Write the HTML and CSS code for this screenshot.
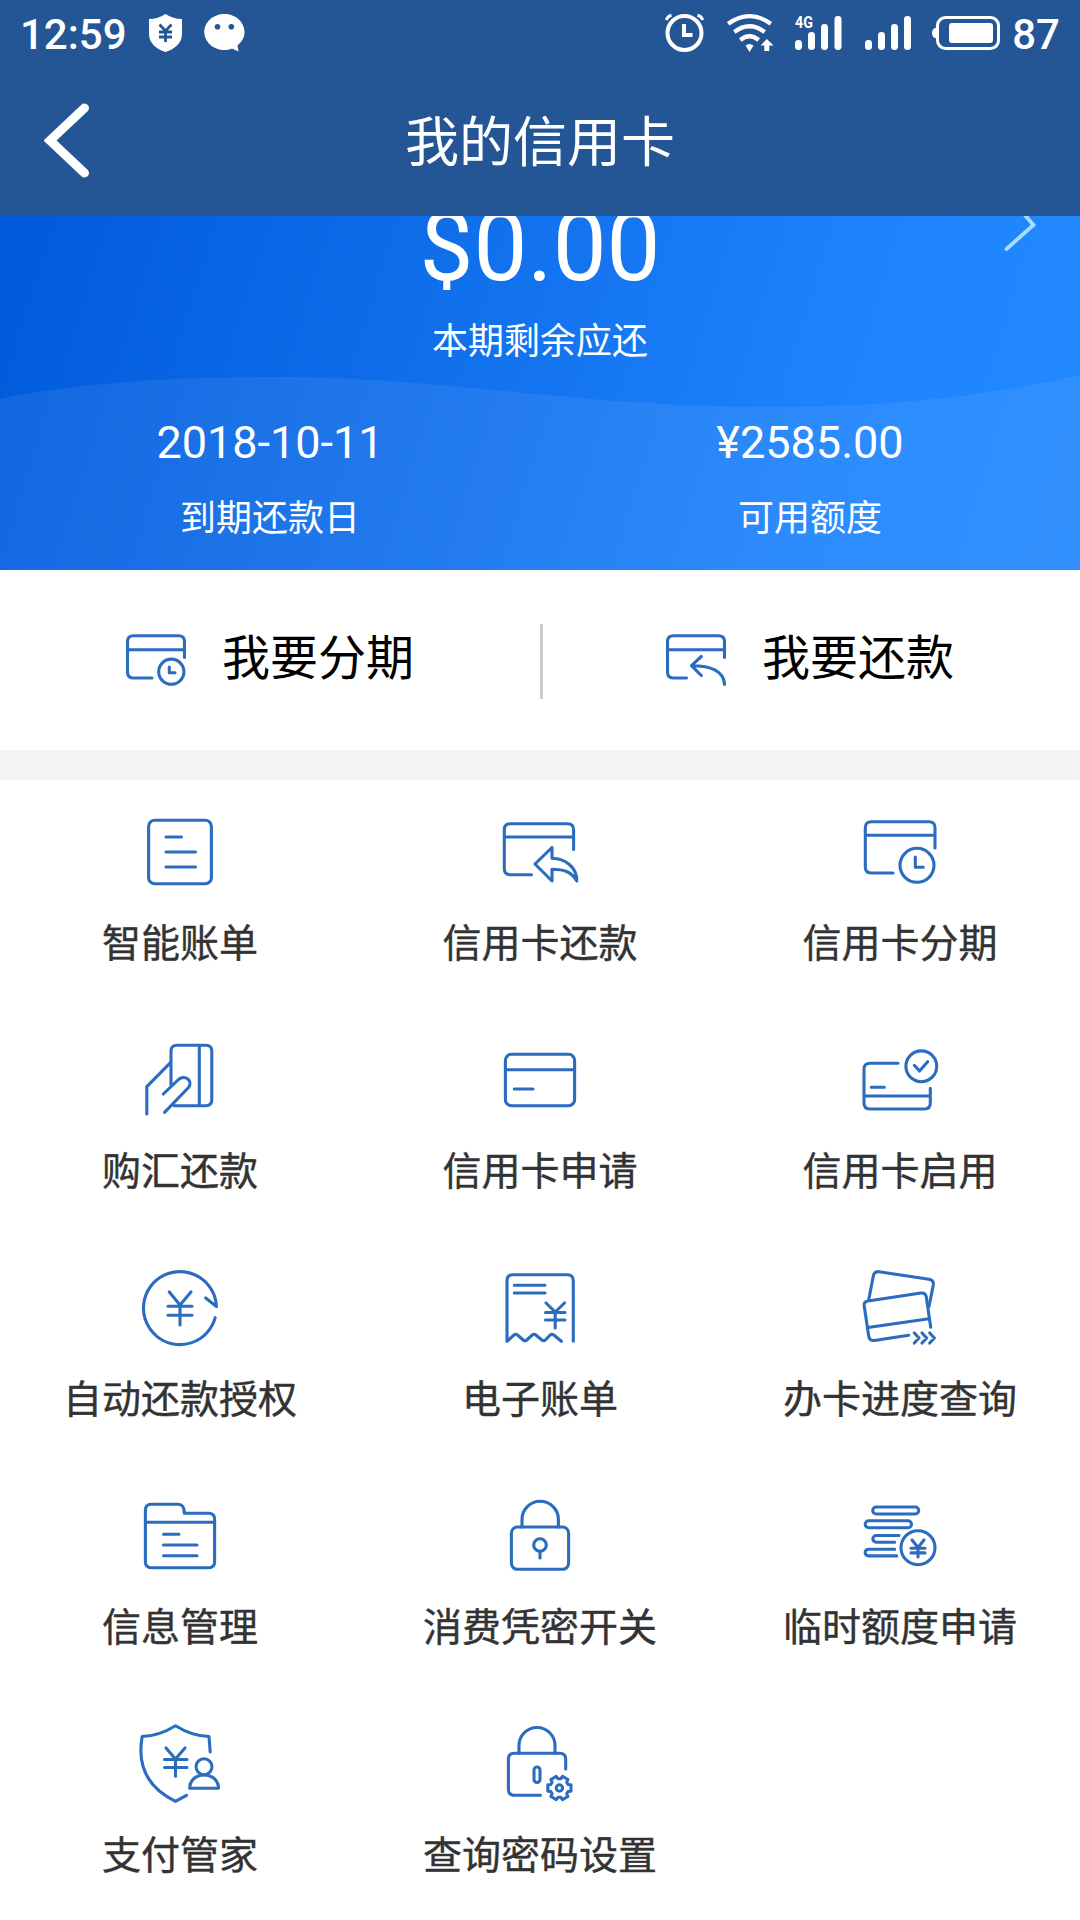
FILE: index.html
```html
<!DOCTYPE html>
<html lang="zh-CN">
<head>
  <meta charset="UTF-8" />
  <meta name="viewport" content="width=device-width, initial-scale=1.0" />
  <title>我的信用卡</title>
  <link rel="stylesheet" href="styles.css">
</head>
<body>

  <!-- Status bar -->
  <div class="status-bar">
    <span class="status-text">12:59</span>
    <svg class="ic-shield" width="33" height="38" viewBox="0 0 33 38">
      <path d="M16.5 0 Q24 5 33 5 V20 C33 29 26 35 16.5 38 C7 35 0 29 0 20 V5 Q9 5 16.5 0Z" fill="#fff"/>
      <path d="M10.5 10.5 L16.5 17 L22.5 10.5 M16.5 17 V28 M10 18 H23 M10 23 H23" fill="none" stroke="#245696" stroke-width="2.8"/>
    </svg>
    <svg class="ic-chat" width="41" height="38" viewBox="0 0 41 38">
      <path d="M20.5 0 C31.5 0 40.5 8 40.5 18 C40.5 23.5 38 28 33.5 31.3 L34.5 37.5 L28 34.5 C25.5 35.6 23 36 20.5 36 C9.5 36 0.3 28 0.3 18 S9.5 0 20.5 0Z" fill="#fff"/>
      <circle cx="13.5" cy="12.8" r="2.8" fill="#245696"/>
      <circle cx="27.3" cy="12.8" r="2.8" fill="#245696"/>
    </svg>
    <div class="status-right">
      <svg class="ic-alarm" width="39" height="38" viewBox="0 0 39 38">
        <g fill="none" stroke="#fff">
          <circle cx="19.5" cy="19" r="17" stroke-width="4"/>
          <path d="M19 10 V21 H27.5" stroke-width="4"/>
          <path d="M1.2 6 Q2.500 2 6.5 1.2 M37.8 6 Q36.5 2 32.5 1.2" stroke-width="3"/>
        </g>
      </svg>
      <svg class="ic-wifi" width="47" height="38" viewBox="0 0 47 38">
        <g fill="none" stroke="#fff" stroke-width="4.2">
          <path d="M1.2 9.8 Q22.5 -5.5 43.8 9.8"/>
          <path d="M7.3 18 Q22.5 6.5 37.7 18"/>
          <path d="M13.3 26 Q22.5 18.5 31.7 26"/>
        </g>
        <path d="M18.5 31.5 Q22.5 28.5 26.5 31.5 L22.5 38Z" fill="#fff"/>
        <path d="M39.8 25 L46.5 31.5 H42.3 V37 H37.3 V31.5 H33.5Z" fill="#fff"/>
      </svg>
      <svg class="ic-signal" width="47" height="36" viewBox="0 0 47 36">
        <g fill="#fff">
          <rect x="0" y="25" width="7" height="10" rx="3.4"/>
          <rect x="13" y="17" width="7" height="18" rx="3.4"/>
          <rect x="26" y="9" width="7" height="26" rx="3.4"/>
          <rect x="39.5" y="1" width="7" height="34" rx="3.4"/>
          <text x="0" y="12.5" class="net-type" textLength="18" lengthAdjust="spacingAndGlyphs">4G</text>
        </g>
      </svg>
      <svg class="ic-signal2" width="47" height="36" viewBox="0 0 47 36">
        <g fill="#fff">
          <rect x="0" y="25" width="7" height="10" rx="3.4"/>
          <rect x="13" y="17" width="7" height="18" rx="3.4"/>
          <rect x="26" y="9" width="7" height="26" rx="3.4"/>
          <rect x="39" y="1" width="7" height="34" rx="3.4"/>
        </g>
      </svg>
      <svg class="ic-battery" width="68" height="34" viewBox="0 0 68 34">
        <rect x="5.5" y="1.5" width="61" height="31" rx="8" fill="none" stroke="#fff" stroke-width="3"/>
        <rect x="17" y="7" width="44" height="20" rx="3" fill="#fff"/>
        <path d="M5 11.5 Q0 12 0 17 T5 22.5Z" fill="#fff"/>
      </svg>
      <span class="status-text">87</span>
    </div>
  </div>

  <!-- Title bar -->
  <div class="title-bar">
    <svg class="back" width="46" height="76" viewBox="0 0 46 76">
      <path d="M40.5 5 L6 37.5 L40.5 70" fill="none" stroke="#fff" stroke-width="9" stroke-linecap="round"/>
    </svg>
    <h1>我的信用卡</h1>
  </div>

  <!-- Card overview -->
  <div class="banner">
    <svg class="wave" width="1080" height="354" viewBox="0 0 1080 354">
      <path d="M0 183 C80 166 180 161 275 161 C450 161 575 191 771 191 C890 191 990 180 1080 159 V354 H0Z" fill="#fff" fill-opacity="0.07"/>
    </svg>
    <svg class="more" width="34" height="40" viewBox="0 0 34 40">
      <path d="M15 -10 L31.5 9 L4.5 33" fill="none" stroke="#a9dcff" stroke-width="3.8" stroke-linecap="round"/>
    </svg>
    <div class="amount">$0.00</div>
    <div class="amount-label">本期剩余应还</div>
    <div class="banner-row">
      <div class="banner-item">
        <p class="value">2018-10-11</p>
        <p class="label">到期还款日</p>
      </div>
      <div class="banner-item">
        <p class="value">¥2585.00</p>
        <p class="label">可用额度</p>
      </div>
    </div>
  </div>

  <div class="actions">
    <div class="action">
      <svg class="icon" width="60" height="54" viewBox="0 0 60 54">
        <path d="M58.500 24.500 V8.500 Q58.500 2.700 52.500 2.700 H7.500 Q1.500 2.700 1.500 8.500 V39 Q1.500 45 7.500 45 H26 M1.500 16.700 H58.500"/>
        <circle cx="45.3" cy="38.7" r="12.6"/>
        <path d="M43.3 34 V39.7 H49"/>
      </svg>
      <span>我要分期</span>
    </div>
    <div class="divider"></div>
    <div class="action">
      <svg class="icon" width="60" height="54" viewBox="0 0 60 54">
        <path d="M58.500 24.500 V8.500 Q58.500 2.700 52.500 2.700 H7.500 Q1.500 2.700 1.500 8.500 V39 Q1.500 45 7.500 45 H20.500 M1.500 16.700 H58.500"/>
        <path d="M35.3 23.5 L25.5 32.7 L35.3 42.5 M25.5 32.7 C44 32.5 58 38 58.5 51.5"/>
      </svg>
      <span>我要还款</span>
    </div>
  </div>

  <!-- Service grid -->
  <div class="grid">
    <div class="cell">
      <svg class="icon" width="96" height="96" viewBox="0 0 96 96">
        <rect x="16.6" y="16.3" width="62.8" height="63.4" rx="6"/>
        <path d="M34 33 H49.5 M34 48 H63.5 M34 63 H63.5"/>
      </svg>
      <p>智能账单</p>
    </div>
    <div class="cell">
      <svg class="icon" width="96" height="96" viewBox="0 0 96 96">
        <path d="M81.6 45.5 V25.7 Q81.6 19.7 75.6 19.7 H18.3 Q12.3 19.7 12.3 25.7 V64.7 Q12.3 70.7 18.3 70.7 H39.5 M12.3 33 H81.6"/>
        <path d="M43 60 L60 43.5 V54.3 C73 54.5 85 63 84.8 77 C80 68 72 65.3 60 65.3 V77Z"/>
      </svg>
      <p>信用卡还款</p>
    </div>
    <div class="cell">
      <svg class="icon" width="96" height="96" viewBox="0 0 96 96">
        <path d="M83 44 V23.7 Q83 17.7 77 17.7 H19.3 Q13.3 17.7 13.3 23.7 V63 Q13.3 69 19.3 69 H41 M13.3 31.3 H83"/>
        <circle cx="65" cy="61.3" r="17"/>
        <path d="M63.3 53 V63.3 H71.3"/>
      </svg>
      <p>信用卡分期</p>
    </div>

    <div class="cell">
      <svg class="icon" width="96" height="96" viewBox="0 0 96 96">
        <path d="M39 53 V19.3 Q39 13.3 45 13.3 H73.8 Q79.8 13.3 79.8 19.3 V67.7 Q79.8 73.7 73.8 73.7 H42 M67.3 13.3 V73.7"/>
        <path d="M38.5 30.7 L14.8 54.7 V82 M31.3 62 L46.5 47.5 C53 42 61.5 49 56.5 55.5 L32.6 80.3"/>
      </svg>
      <p>购汇还款</p>
    </div>
    <div class="cell">
      <svg class="icon" width="96" height="96" viewBox="0 0 96 96">
        <rect x="13.4" y="22.3" width="69.2" height="51.4" rx="6"/>
        <path d="M13.4 37.7 H82.6 M22.3 57 H41"/>
      </svg>
      <p>信用卡申请</p>
    </div>
    <div class="cell">
      <svg class="icon" width="96" height="96" viewBox="0 0 96 96">
        <path d="M46 31.3 H18 Q12 31.3 12 37.3 V71 Q12 77 18 77 H72.3 Q78.3 77 78.3 71 V56.3 M12 64 H78.3 M19.3 55.3 H32.3"/>
        <circle cx="69.3" cy="34.3" r="15.4"/>
        <path d="M62.3 33.3 L67.5 39 L75.7 29.7"/>
      </svg>
      <p>信用卡启用</p>
    </div>

    <div class="cell">
      <svg class="icon" width="96" height="96" viewBox="0 0 96 96">
        <path d="M83.2 57.7 A36.500 36.500 0 1 1 84.450 46.500 L73.700 38"/>
        <path d="M37.3 32 L48 45 L59 32 M48 45 V65 M36 46.3 H60 M36 55.3 H60"/>
      </svg>
      <p>自动还款授权</p>
    </div>
    <div class="cell">
      <svg class="icon" width="96" height="96" viewBox="0 0 96 96">
        <path d="M81.300 81.300 V20.700 Q81.300 14.700 75.300 14.700 H21 Q15 14.700 15 20.700 V81.300 L22 75 Q23.800 73.500 25.500 75 L31.300 80 Q33 81.500 34.800 80 L40.300 75 Q42 73.500 43.800 75 L49.800 80 Q51.600 81.500 53.400 80 L58.200 75 Q60 73.500 61.800 75 L69.400 81.300"/>
        <path d="M22.3 25.3 H53 M22.3 33 H53 M54 43 L63.2 52 L72.5 43 M63.2 52 V68 M53.5 52.5 H73 M53.5 60 H73"/>
      </svg>
      <p>电子账单</p>
    </div>
    <div class="cell">
      <svg class="icon" width="96" height="96" viewBox="0 0 96 96">
        <path d="M16.7 40 L21.3 16 Q22.3 11.3 27 11.7 L77 19.2 Q82 20 81.3 25 L77 46.5"/>
        <path d="M56.7 75.3 L22.5 80.5 Q17.5 81 16.7 76 L12.2 46 Q11.7 41.5 16 41 L69 33 Q73.5 32.5 74.3 37 L78.7 67.3 M16 67.5 L77 58.7"/>
        <path d="M62.3 73 L67 78 L62.3 83 M70 73 L74.7 78 L70 83 M77.7 73 L82.4 78 L77.7 83"/>
      </svg>
      <p>办卡进度查询</p>
    </div>

    <div class="cell">
      <svg class="icon" width="96" height="96" viewBox="0 0 96 96">
        <path d="M19.4 16.3 H46.3 Q52.3 16.3 52.3 25.3 H76.6 Q82.6 25.3 82.6 31.3 V73.7 Q82.6 79.7 76.6 79.7 H19.4 Q13.4 79.7 13.4 73.7 V22.3 Q13.4 16.3 19.4 16.3Z"/>
        <path d="M13.4 34.3 H82.6 M31.5 46.3 H47 M31.5 57 H65 M31.5 67.7 H65"/>
      </svg>
      <p>信息管理</p>
    </div>
    <div class="cell">
      <svg class="icon" width="96" height="96" viewBox="0 0 96 96">
        <rect x="19.4" y="39" width="57.2" height="42.3" rx="6"/>
        <path d="M30 39 V31.5 A18.2 18.2 0 0 1 66.4 31.5 V39"/>
        <circle cx="48" cy="57" r="6.3"/>
        <path d="M48 63.5 V70"/>
      </svg>
      <p>消费凭密开关</p>
    </div>
    <div class="cell">
      <svg class="icon" width="96" height="96" viewBox="0 0 96 96">
        <rect x="20.7" y="19" width="46" height="7" rx="3.5"/>
        <rect x="13.2" y="32.7" width="46.3" height="7" rx="3.5"/>
        <path d="M47 47.5 H24.2 A3.3 3.3 0 0 0 24.2 54.2 H42.7 M42.7 61.2 H16.5 A3.3 3.3 0 0 0 16.5 67.9 H44.7"/>
        <circle cx="66" cy="59.7" r="17"/>
        <path d="M60 52 L66 59.5 L72 52 M66 59.5 V69 M59 60.3 H73 M59 64.9 H73"/>
      </svg>
      <p>临时额度申请</p>
    </div>

    <div class="cell">
      <svg class="icon" width="96" height="96" viewBox="0 0 96 96">
        <path d="M78.2 36 L77 20.5 Q60 20 43.5 9.7 Q27 20 10.2 20.5 C5 49 14 71 43.5 85.3 L54.5 79.3"/>
        <path d="M34 32 L43.5 43 L53 32 M43.5 43 V60.3 M32.5 43.5 H55 M32.5 51.5 H55"/>
        <circle cx="72" cy="50.7" r="8"/>
        <path d="M57.7 72.3 C58 54.5 86 54.5 86.6 72.3Z"/>
      </svg>
      <p>支付管家</p>
    </div>
    <div class="cell">
      <svg class="icon" width="96" height="96" viewBox="0 0 96 96">
        <path d="M73.7 53 V43.3 Q73.7 37.3 67.7 37.3 H22.4 Q16.4 37.3 16.4 43.3 V73.3 Q16.4 79.3 22.4 79.3 H48.5"/>
        <path d="M27 37.3 V29.5 A18 18 0 0 1 63 29.5 V37.3"/>
        <rect x="42" y="51" width="6" height="15.5" rx="3"/>
        <g transform="translate(67.4 72)">
          <path d="M11.6 -3.1 V3.1 L8.6 3.5 L7.3 5.7 L8.5 8.5 L3.1 11.6 L1.3 9.2 H-1.3 L-3.1 11.6 L-8.5 8.5 L-7.3 5.7 L-8.6 3.5 L-11.6 3.1 V-3.1 L-8.6 -3.5 L-7.3 -5.7 L-8.5 -8.5 L-3.1 -11.6 L-1.3 -9.2 H1.3 L3.1 -11.6 L8.5 -8.5 L7.3 -5.7 L8.6 -3.5Z"/>
          <circle r="3.2"/>
        </g>
      </svg>
      <p>查询密码设置</p>
    </div>
  </div>

</body>
</html>
```
FILE: styles.css
```css
* {
  box-sizing: border-box;
  margin: 0;
  padding: 0;
}

body {
  width: 1080px;
  height: 1920px;
  background: #fff;
  font-family: "Noto Sans CJK SC", "Noto Sans", sans-serif;
  overflow: hidden;
}

svg {
  display: block;
  flex-shrink: 0;
}

/* Status bar */
.status-bar {
  display: flex;
  align-items: center;
  height: 66px;
  padding: 0 20px 0 20px;
  background: #245696;
  color: #fff;
}

.status-text {
  font-family: Roboto, sans-serif;
  font-size: 42px;
  font-weight: 500;
  line-height: 64px;
  padding-top: 3px;
}

.ic-shield {
  margin-left: 22px;
}

.ic-chat {
  margin-left: 22px;
}

.status-right {
  display: flex;
  align-items: center;
  margin-left: auto;
}

.ic-wifi {
  margin-left: 23px;
}

.ic-signal {
  margin-left: 21px;
  overflow: visible;
}

.ic-signal2 {
  margin-left: 23px;
}

.ic-battery {
  margin-left: 20px;
  margin-right: 12px;
}

.net-type {
  font-family: Roboto, sans-serif;
  font-size: 16px;
  font-weight: 700;
}

/* Title bar */
.title-bar {
  display: flex;
  align-items: center;
  height: 150px;
  padding: 0 45px 0 44px;
  background: #245696;
  color: #fff;
}

.title-bar h1 {
  flex: 1;
  margin-right: 45px;
  padding-bottom: 4px;
  font-size: 54px;
  font-weight: 400;
  line-height: 80px;
  text-align: center;
}

/* Card overview */
.banner {
  position: relative;
  height: 354px;
  background: linear-gradient(107deg, #005bdb 2%, #1372ee 46%, #1e84fd 76%, #2389ff 100%);
  color: #fff;
  text-align: center;
  overflow: hidden;
}

.wave {
  position: absolute;
  left: 0;
  top: 0;
}

.more {
  position: absolute;
  left: 1002px;
  top: 0;
}

.amount {
  position: relative;
  margin-top: -25px;
  font-family: Roboto, sans-serif;
  font-size: 96px;
  line-height: 112px;
}

.amount-label {
  position: relative;
  margin-top: 9px;
  font-size: 36px;
  line-height: 52px;
}

.banner-row {
  position: relative;
  display: flex;
  margin-top: 53px;
}

.banner-item {
  flex: 1;
}

.banner-item .value {
  font-family: Roboto, sans-serif;
  font-size: 45px;
  line-height: 52px;
}

.banner-item .label {
  margin-top: 20px;
  font-size: 36px;
  line-height: 52px;
}

/* Quick actions */
.actions {
  display: flex;
  height: 210px;
  border-bottom: 30px solid #f4f4f4;
}

.action {
  display: flex;
  flex: 1;
  align-items: center;
  justify-content: center;
  gap: 36px;
  font-size: 48px;
  line-height: 70px;
  color: #000;
}

.action span {
  margin-top: -12px;
}

.divider {
  width: 3px;
  height: 75px;
  margin: 54px -3px 0 0;
  background: #ccc;
}

.icon {
  fill: none;
  stroke: #2c6cbf;
  stroke-width: 3.1;
  stroke-linecap: round;
  stroke-linejoin: round;
}

/* Service grid */
.grid {
  display: grid;
  grid-template-columns: repeat(3, 1fr);
  grid-auto-rows: 228px;
}

.cell {
  display: flex;
  flex-direction: column;
  align-items: center;
  padding-top: 24px;
}

.cell p {
  margin-top: 16px;
  font-size: 39px;
  line-height: 48px;
  color: #333;
  -webkit-text-stroke: 0.4px #333;
}
```
